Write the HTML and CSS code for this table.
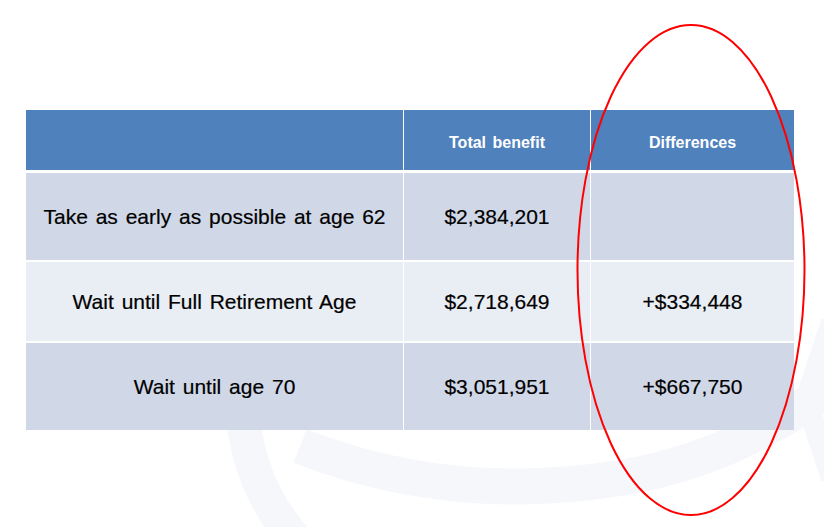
FILE: index.html
```html
<!DOCTYPE html>
<html>
<head>
<meta charset="utf-8">
<link rel="stylesheet" href="styles.css">
</head>
<body>
<div class="slide">
  <svg class="watermark" width="824" height="527" viewBox="0 0 824 527" aria-hidden="true">
    <path d="M244 425 Q252 490 296 540" fill="none" stroke="#f6f7fa" stroke-width="34"/>
    <path d="M300 446 Q450 505 620 478 Q740 458 840 380" fill="none" stroke="#f6f7fa" stroke-width="36"/>
    <path d="M832 322 L806 400 L832 478" fill="none" stroke="#f6f7fa" stroke-width="22"/>
  </svg>
  <div class="table">
    <div class="cell head"></div>
    <div class="cell head">Total benefit</div>
    <div class="cell head">Differences</div>

    <div class="cell dark">Take as early as possible at age 62</div>
    <div class="cell dark">$2,384,201</div>
    <div class="cell dark"></div>

    <div class="cell light">Wait until Full Retirement Age</div>
    <div class="cell light">$2,718,649</div>
    <div class="cell light">+$334,448</div>

    <div class="cell dark">Wait until age 70</div>
    <div class="cell dark">$3,051,951</div>
    <div class="cell dark">+$667,750</div>
  </div>
  <svg class="ellipse" width="824" height="527" viewBox="0 0 824 527" aria-hidden="true">
    <ellipse cx="691" cy="270" rx="113.5" ry="245" fill="none" stroke="#ff0000" stroke-width="2"/>
  </svg>
</div>
</body>
</html>
```
FILE: styles.css
```css
html, body {
  margin: 0;
  padding: 0;
  background: #ffffff;
}

.slide {
  position: relative;
  width: 824px;
  height: 527px;
  overflow: hidden;
  padding: 110px 0 0 26px;
  box-sizing: border-box;
  font-family: "Liberation Sans", Arial, sans-serif;
}

.watermark {
  position: absolute;
  left: 0;
  top: 0;
}

.ellipse {
  position: absolute;
  left: 0;
  top: 0;
  pointer-events: none;
}

.table {
  position: relative;
  display: grid;
  width: 768px;
  grid-template-columns: 377px 186px 203px;
  grid-template-rows: 61px 87px 79px 87px;
  column-gap: 1px;
  row-gap: 2px;
}

.cell {
  display: flex;
  align-items: center;
  justify-content: center;
  text-align: center;
  font-size: 21px;
  color: #000000;
  word-spacing: 2px;
  -webkit-text-stroke: 0.2px #000000;
}

.head {
  background: #4f81bd;
  color: #ffffff;
  font-weight: bold;
  font-size: 16px;
  padding-top: 5px;
  box-sizing: border-box;
  margin-bottom: 1px;
  -webkit-text-stroke: 0;
}

.dark {
  background: #d0d8e8;
}

.light {
  background: #e9edf4;
}
```
